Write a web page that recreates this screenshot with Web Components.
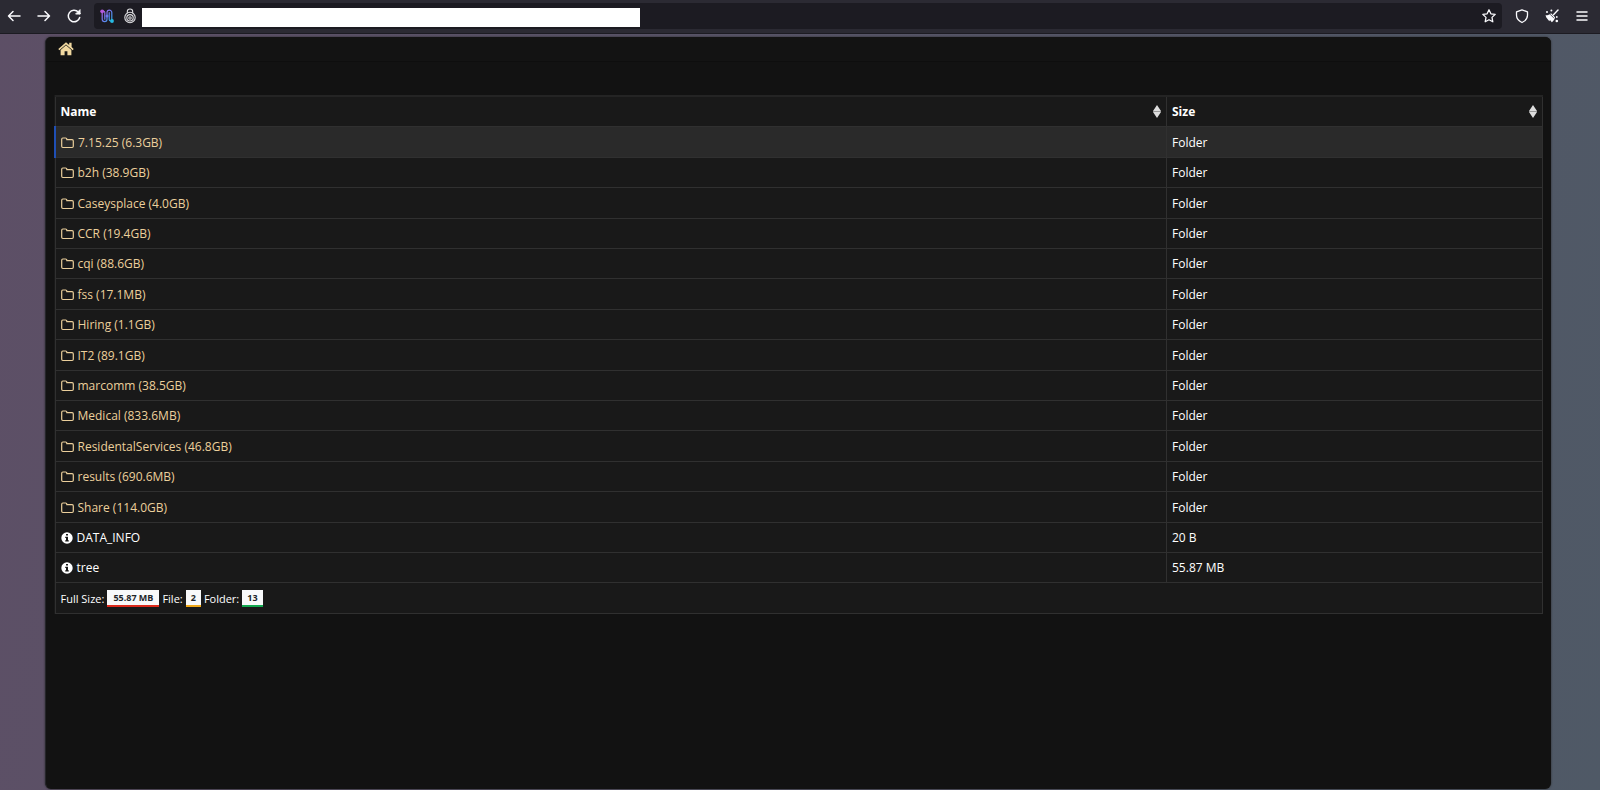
<!DOCTYPE html>
<html lang="en">
<head>
<meta charset="utf-8">
<title>Files</title>
<style>
  html, body { height: 100%; margin: 0; }
  body {
    display: flex; flex-direction: column;
    font: 12px/20px "Open Sans", "Noto Sans", sans-serif;
    color: #fff;
    background: linear-gradient(100deg, #5d4f66, #4f5966);
  }
</style>
</head>
<body>
<browser-bar></browser-bar>
<file-panel>
  <a-crumb slot="path"></a-crumb>
  <file-table></file-table>
</file-panel>

<template id="bar-tpl">
  <style>
    :host { display: flex; align-items: center; flex: none; box-sizing: border-box; height: 34px; padding: 0 10px 1px 6px;
      background: #2b2a33; border-bottom: 1px solid #1c1b22; color: #fbfbfe; }
    button { display: grid; place-items: center; width: 16px; height: 16px; padding: 0; border: 0; background: none; color: inherit; }
    svg { display: block; width: 16px; height: 16px; fill: none; stroke: currentColor; stroke-width: 1.5; stroke-linecap: round; stroke-linejoin: round; }
    .nav, .tools { display: flex; gap: 14px; }
    .address { flex: 1; display: flex; align-items: center; gap: 7px; box-sizing: border-box; height: 26px; margin: 0 12px; padding: 0 5px; border-radius: 4px; background: #1c1b22; }
    input { box-sizing: border-box; width: 36%; max-width: 498px; height: 19px; margin: 3px auto 0 -3px; padding: 0 4px; border: 0; border-radius: 0; background: #fff; font: inherit; color: #111; }
  </style>
  <nav class="nav">
    <button aria-label="Back"><svg viewBox="0 0 16 16"><path d="M14 8H2.500M7 3.500L2.500 8 7 12.500"/></svg></button>
    <button aria-label="Forward"><svg viewBox="0 0 16 16"><path d="M2 8h11.500M9 3.500l4.500 4.500L9 12.500"/></svg></button>
    <button aria-label="Reload"><svg viewBox="0 0 16 16"><path d="M13.700 9.500A5.800 5.800 0 1 1 12.300 4L14 5.600"/><path d="M14 2v4h-4z" fill="currentColor" stroke-width="1"/></svg></button>
  </nav>
  <div class="address">
    <button aria-label="Connection circuit"><svg viewBox="0 0 16 16"><defs><linearGradient id="g" gradientUnits="userSpaceOnUse" x1="2" y1="3" x2="14" y2="13"><stop offset="0" stop-color="#b85be0"/><stop offset=".5" stop-color="#6b7cf0"/><stop offset="1" stop-color="#25b5e8"/></linearGradient></defs><g stroke="url(#g)" stroke-width="1.200"><path d="M3.200 4.500v6.700a2.400 2.400 0 0 0 4.800 0V4.500a2.400 2.400 0 0 1 4.800 0V12"/><path d="M4 3h.5a1.500 1.500 0 0 1 1.300 1.500v6.700M10.200 4.700v6.800a1.500 1.500 0 0 0 1.500 1.500"/></g><g stroke="none"><circle cx="3.200" cy="3.300" r="1.900" fill="#b458dc"/><circle cx="8" cy="8" r="1.500" fill="#6c76ed"/><circle cx="13" cy="13" r="1.900" fill="#27bbe4"/></g></svg></button>
    <button aria-label="Onion site"><svg viewBox="0 0 16 16"><g stroke-width="1.100" stroke="#dddde0"><path d="M5.300 5V3.700a2.700 2.700 0 0 1 5.400 0V5"/><circle cx="8" cy="9.500" r="5.200"/><circle cx="8" cy="9.800" r="3.200"/><circle cx="8" cy="10" r="1.200"/></g></svg></button>
    <input type="text" aria-label="Address">
    <button aria-label="Bookmark"><svg viewBox="0 0 16 16"><path d="M8 1.800l1.900 4 4.300.6-3.200 3 .8 4.400L8 11.700l-3.800 2.100.8-4.400-3.200-3 4.300-.6z" stroke-width="1.300"/></svg></button>
  </div>
  <div class="tools">
    <button aria-label="Security level"><svg viewBox="0 0 16 16"><path d="M8 1.800l5.500 2.100v3.400c0 3-2 5.500-5.500 7.200-3.500-1.700-5.500-4.200-5.500-7.200V3.900z" stroke-width="1.300"/></svg></button>
    <button aria-label="New identity"><svg viewBox="0 0 16 16"><path d="M14 2L9.500 6.800" stroke-width="1.400"/><path d="M7 5.200L11 9.200c-.3 2-1.500 3.800-3.200 5L6 12l-.7 1.200L2.300 9.500 1.500 7.300c2 .2 4-.6 5.500-2.100z" fill="currentColor" stroke="none"/><path d="M6.400 6.600l3.200 3.100" stroke="#2b2a33" stroke-width=".8"/><g fill="currentColor" stroke="none"><circle cx="3" cy="4" r="1"/><circle cx="7.400" cy="2.500" r="1"/><circle cx="12.800" cy="9" r=".9"/><circle cx="12.800" cy="13" r="1.300"/></g></svg></button>
    <button aria-label="Menu"><svg viewBox="0 0 16 16"><path d="M3 4h10M3 8h10M3 12h10"/></svg></button>
  </div>
</template>

<template id="panel-tpl">
  <style>
    :host { display: flex; flex-direction: column; flex: 1; margin: 3px 49px 1px 45px; border-radius: 6px; background: #121212;
      border: 1px solid #25252a; border-width: 0 0 0 1px; box-shadow: 0 0 2px #222; overflow: hidden; }
    header { padding: 4px 12px; background: #131313; border-bottom: 1px solid #0e0e0e; }
    main { padding: 33px 8px; }
  </style>
  <header><slot name="path"></slot></header>
  <main><slot></slot></main>
</template>

<template id="crumb-tpl">
  <style>
    :host { display: flex; }
    a { display: block; color: #f0d8a0; }
    svg { display: block; width: 16px; height: 16px; fill: currentColor; }
  </style>
  <a href="#" aria-label="Home"><svg viewBox="0 0 16 16"><path d="M8 1.200L.3 8l1 1.300L8 3.500l6.700 5.800 1-1.300L13.600 6.100V1.800h-2.400V4z"/><path d="M8 4.200l5.400 4.700v5.300H9.400v-4H6.600v4H2.600V8.900z"/></svg></a>
</template>

<template id="table-tpl">
  <style>
    :host { display: block; }
    table { width: 100%; table-layout: fixed; border-collapse: collapse; background: #191919; }
    col.size { width: 376px; }
    th, td { box-sizing: border-box; height: 30px; padding: 2px 5px 0; border: 1px solid #303030; text-align: left; line-height: 20px; }
    thead th { border-top: 2px solid #242424; }
    tbody tr:nth-child(5n+1) td, tbody tr:nth-child(5n+3) td { height: 31px; }
    tbody tr:first-child td { background: #2a2a2a; }
    tbody tr:first-child td:first-child { border-left: 2px solid #1f4fb5; }
    .head { display: flex; align-items: center; justify-content: space-between; }
    .sort { display: block; width: 8px; height: 14px; padding: 0; border: 0; background: none; }
    svg { display: block; flex: none; }
    a { display: flex; align-items: center; gap: 4px; color: #fff; text-decoration: none; }
    a.folder { color: #ecd09c; }
    .totals { display: flex; align-items: center; gap: 3px; font-size: 11px; line-height: 20px; }
    b { padding: 0 5px; background: #f8f9fa; color: #212529; font-size: 9px; line-height: 15px; border-bottom: 2px solid; }
    b.red { padding: 0 6px; border-color: #dc2a1c; }
    b.amber { border-color: #f0a818; }
    b.green { border-color: #12a850; }
  </style>
  <table>
    <colgroup><col><col class="size"></colgroup>
    <thead><tr></tr></thead>
    <tbody></tbody>
  </table>
</template>

<script>
  const stamp = (host, id) => {
    const root = host.attachShadow({ mode: "open" });
    root.append(document.getElementById(id).content.cloneNode(true));
    return root;
  };

  const FOLDER = '<svg width="13" height="14" viewBox="0 0 13 14" fill="none" stroke="currentColor" stroke-width="1.200" stroke-linejoin="round" aria-hidden="true"><path d="M.7 3.200q0-1.200 1.200-1.200h2.700q1.200 0 1.200 1.200v.5h5.300q1.200 0 1.200 1.200v5.400q0 1.200-1.200 1.200H1.900q-1.200 0-1.200-1.200z"/></svg>';
  const INFO = '<svg width="12" height="12" viewBox="0 0 12 12" aria-hidden="true"><circle cx="6" cy="6" r="5.700" fill="#fff"/><path d="M5 2h2v1.600H5zM4.200 4.700H7v3.600h.8v1.200H4.200V8.300H5V5.900h-.8z" fill="#191919"/></svg>';
  const SORT = '<svg width="8" height="14" viewBox="0 0 8 14" aria-hidden="true"><path d="M4 0l4 6H0zM4 13L0 7h8z" fill="#ddd"/><path d="M0 6h8v1H0z" fill="#999"/></svg>';

  const folders = ["7.15.25 (6.3GB)", "b2h (38.9GB)", "Caseysplace (4.0GB)", "CCR (19.4GB)", "cqi (88.6GB)", "fss (17.1MB)",
    "Hiring (1.1GB)", "IT2 (89.1GB)", "marcomm (38.5GB)", "Medical (833.6MB)", "ResidentalServices (46.8GB)",
    "results (690.6MB)", "Share (114.0GB)"];
  const files = [["DATA_INFO", "20 B"], ["tree", "55.87 MB"]];

  customElements.define("browser-bar", class extends HTMLElement {
    constructor() { super(); stamp(this, "bar-tpl"); }
  });
  customElements.define("file-panel", class extends HTMLElement {
    constructor() { super(); stamp(this, "panel-tpl"); }
  });
  customElements.define("a-crumb", class extends HTMLElement {
    constructor() { super(); stamp(this, "crumb-tpl"); }
  });
  customElements.define("file-table", class extends HTMLElement {
    constructor() {
      super();
      const root = stamp(this, "table-tpl");
      root.querySelector("thead tr").innerHTML = ["Name", "Size"].map(t =>
        `<th scope="col"><div class="head"><span>${t}</span><button class="sort" aria-label="Sort by ${t}">${SORT}</button></div></th>`).join("");
      root.querySelector("tbody").innerHTML =
        folders.map(n => `<tr><td><a class="folder" href="#">${FOLDER}<span>${n}</span></a></td><td>Folder</td></tr>`).join("") +
        files.map(([n, s]) => `<tr><td><a href="#">${INFO}<span>${n}</span></a></td><td>${s}</td></tr>`).join("") +
        `<tr><td colspan="2"><div class="totals"><span>Full Size:</span><b class="red">55.87 MB</b><span>File:</span><b class="amber">2</b><span>Folder:</span><b class="green">13</b></div></td></tr>`;
    }
  });
</script>
</body>
</html>
